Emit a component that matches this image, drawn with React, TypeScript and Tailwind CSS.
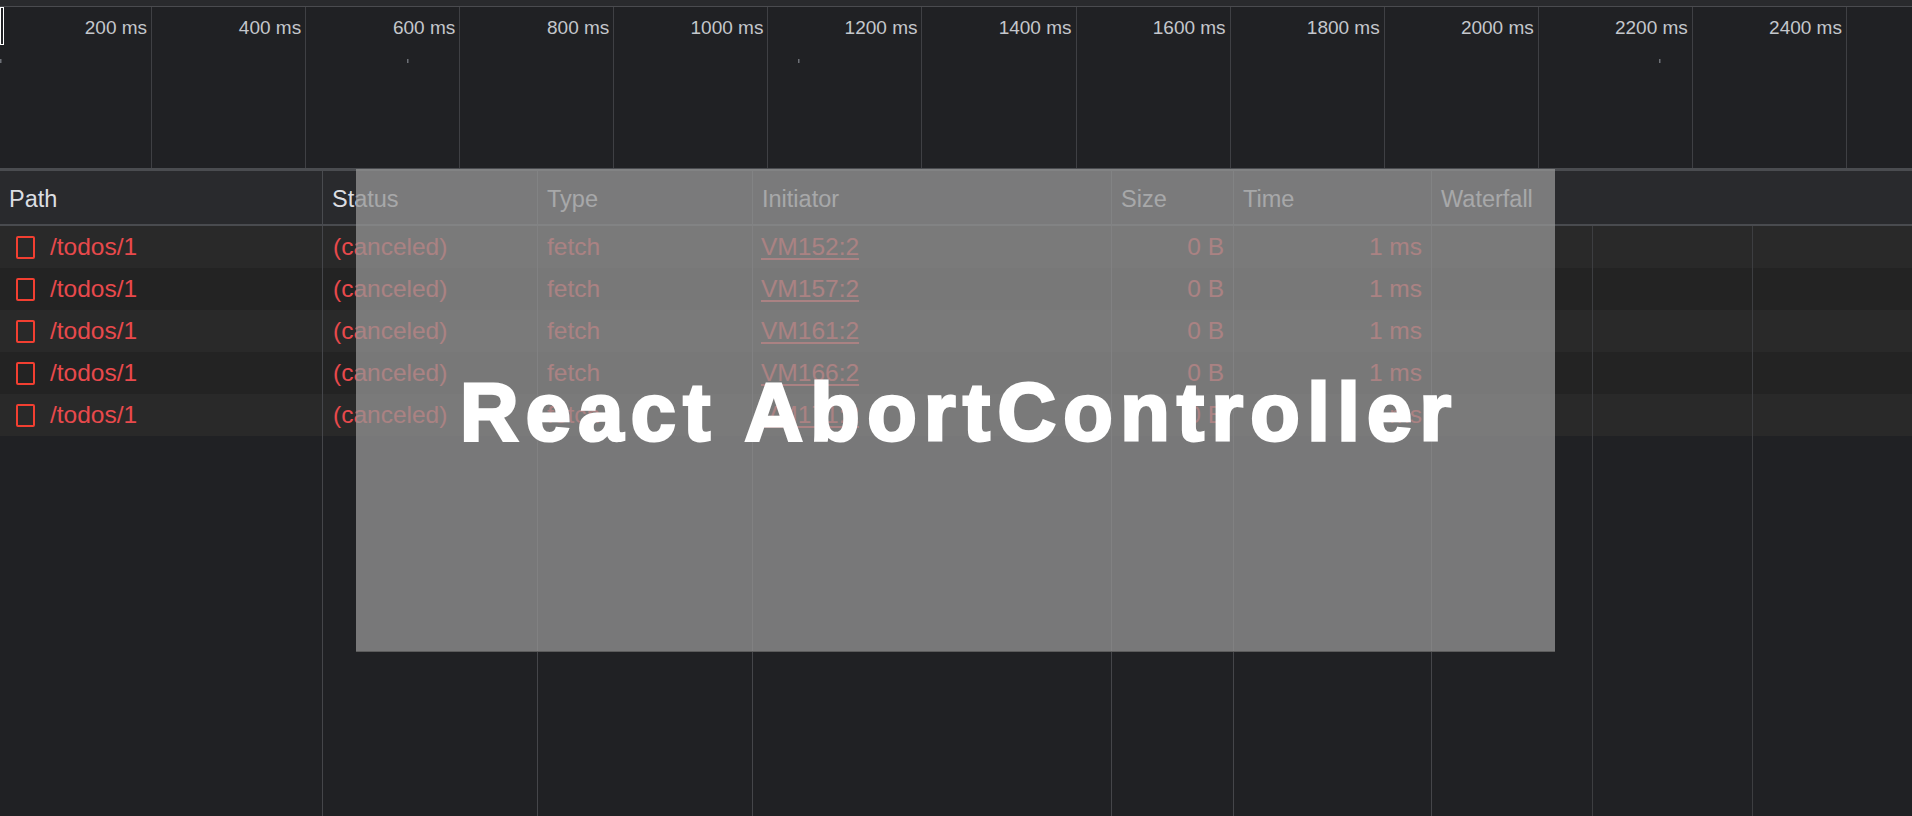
import React from 'react';

const ticks = [200, 400, 600, 800, 1000, 1200, 1400, 1600, 1800, 2000, 2200, 2400, null];

const requests = ['VM152:2', 'VM157:2', 'VM161:2', 'VM166:2', 'VM171:2'];

// x positions of the little request marks in the overview
const marks = [0, 407, 798, 1659];

function Timeline() {
  return (
    <div className="relative h-[164px] shrink-0 border-b-[3px] border-[#4a4c50] bg-[#202124] overflow-hidden">
      <div className="flex h-full ml-[-2px]">
        {ticks.map((t, i) => (
          <div
            key={i}
            className="h-full w-[154.09px] shrink-0 border-r border-[#3f4044] flex justify-end pr-[4px] pt-[11px] text-[19px] leading-[19px] text-[#c4c7cc]"
          >
            {t !== null ? `${t} ms` : ''}
          </div>
        ))}
      </div>
      <svg className="absolute left-0 top-0 pointer-events-none" width="1912" height="161">
        {marks.map(x => (
          <rect key={x} x={x} y={52} width={1.5} height={4} fill="#6d7076" />
        ))}
      </svg>
      <div className="absolute left-0 top-0 w-[4px] h-[38px] border-[1.5px] border-white" />
    </div>
  );
}

function HeaderCell({ w, label, last }: { w: string; label: string; last?: boolean }) {
  return (
    <div
      className={
        'h-full flex items-center pt-[3px] pl-[9px] shrink-0 ' +
        w +
        (last ? ' flex-1' : ' border-r border-[#494b4f]')
      }
    >
      {label}
    </div>
  );
}

function WaterfallGrid() {
  return (
    <div className="flex-1 h-full flex">
      <div className="w-[160.5px] h-full shrink-0 border-r border-[#3d3e41]" />
      <div className="w-[160.5px] h-full shrink-0 border-r border-[#3d3e41]" />
      <div className="w-[160.5px] h-full shrink-0 border-r border-[#3d3e41]" />
    </div>
  );
}

function Row({ initiator, odd }: { initiator: string; odd: boolean }) {
  return (
    <div
      className={
        'h-[42px] shrink-0 flex text-[24.5px] leading-[28px] text-[#e8494c] ' +
        (odd ? 'bg-[#292929]' : 'bg-[#232323]')
      }
    >
      <div className="w-[323px] h-full shrink-0 border-r border-[#45464a] flex items-center">
        <div className="ml-[16px] w-[19px] h-[23px] border-2 border-[#f23f31] rounded-[2px]" />
        <span className="ml-[15px]">/todos/1</span>
      </div>
      <div className="w-[215px] h-full shrink-0 border-r border-[#45464a] flex items-center pl-[10px]">
        (canceled)
      </div>
      <div className="w-[215px] h-full shrink-0 border-r border-[#45464a] flex items-center pl-[9px]">
        fetch
      </div>
      <div className="w-[359px] h-full shrink-0 border-r border-[#45464a] flex items-center pl-[8px]">
        <span className="underline underline-offset-[3px] decoration-[1.5px]">{initiator}</span>
      </div>
      <div className="w-[122px] h-full shrink-0 border-r border-[#45464a] flex items-center justify-end pr-[9px]">
        0 B
      </div>
      <div className="w-[198px] h-full shrink-0 border-r border-[#45464a] flex items-center justify-end pr-[9px]">
        1 ms
      </div>
      <WaterfallGrid />
    </div>
  );
}

export default function App() {
  return (
    <div className="relative h-screen w-full overflow-hidden bg-[#202124] flex flex-col font-['Liberation_Sans',Arial,sans-serif]">
      <div className="h-[7px] shrink-0 bg-[#292a2d] border-b border-[#4a4b4f]" />
      <Timeline />

      <div className="h-[55px] shrink-0 flex bg-[#292a2d] border-b-2 border-[#494b4f] text-[23.5px] leading-[28px] text-[#dcdee2]">
        <HeaderCell w="w-[323px]" label="Path" />
        <HeaderCell w="w-[215px]" label="Status" />
        <HeaderCell w="w-[215px]" label="Type" />
        <HeaderCell w="w-[359px]" label="Initiator" />
        <HeaderCell w="w-[122px]" label="Size" />
        <HeaderCell w="w-[198px]" label="Time" />
        <HeaderCell w="" label="Waterfall" last />
      </div>

      {requests.map((r, i) => (
        <Row key={r} initiator={r} odd={i % 2 === 0} />
      ))}

      <div className="flex-1 flex">
        <div className="w-[323px] h-full shrink-0 border-r border-[#45464a]" />
        <div className="w-[215px] h-full shrink-0 border-r border-[#45464a]" />
        <div className="w-[215px] h-full shrink-0 border-r border-[#45464a]" />
        <div className="w-[359px] h-full shrink-0 border-r border-[#45464a]" />
        <div className="w-[122px] h-full shrink-0 border-r border-[#45464a]" />
        <div className="w-[198px] h-full shrink-0 border-r border-[#45464a]" />
        <WaterfallGrid />
      </div>

      {/* title card laid over the network panel */}
      <div className="absolute left-[356px] top-[169px] w-[1199px] h-[483px] bg-[rgba(150,150,150,0.75)] border-b border-[#5c5c5c] flex items-center justify-center pt-[4px]">
        <h1 className="text-white font-bold text-[81px] leading-none tracking-[7.4px] pl-[7.4px] whitespace-nowrap [-webkit-text-stroke:3px_white]">
          React AbortController
        </h1>
      </div>
    </div>
  );
}
